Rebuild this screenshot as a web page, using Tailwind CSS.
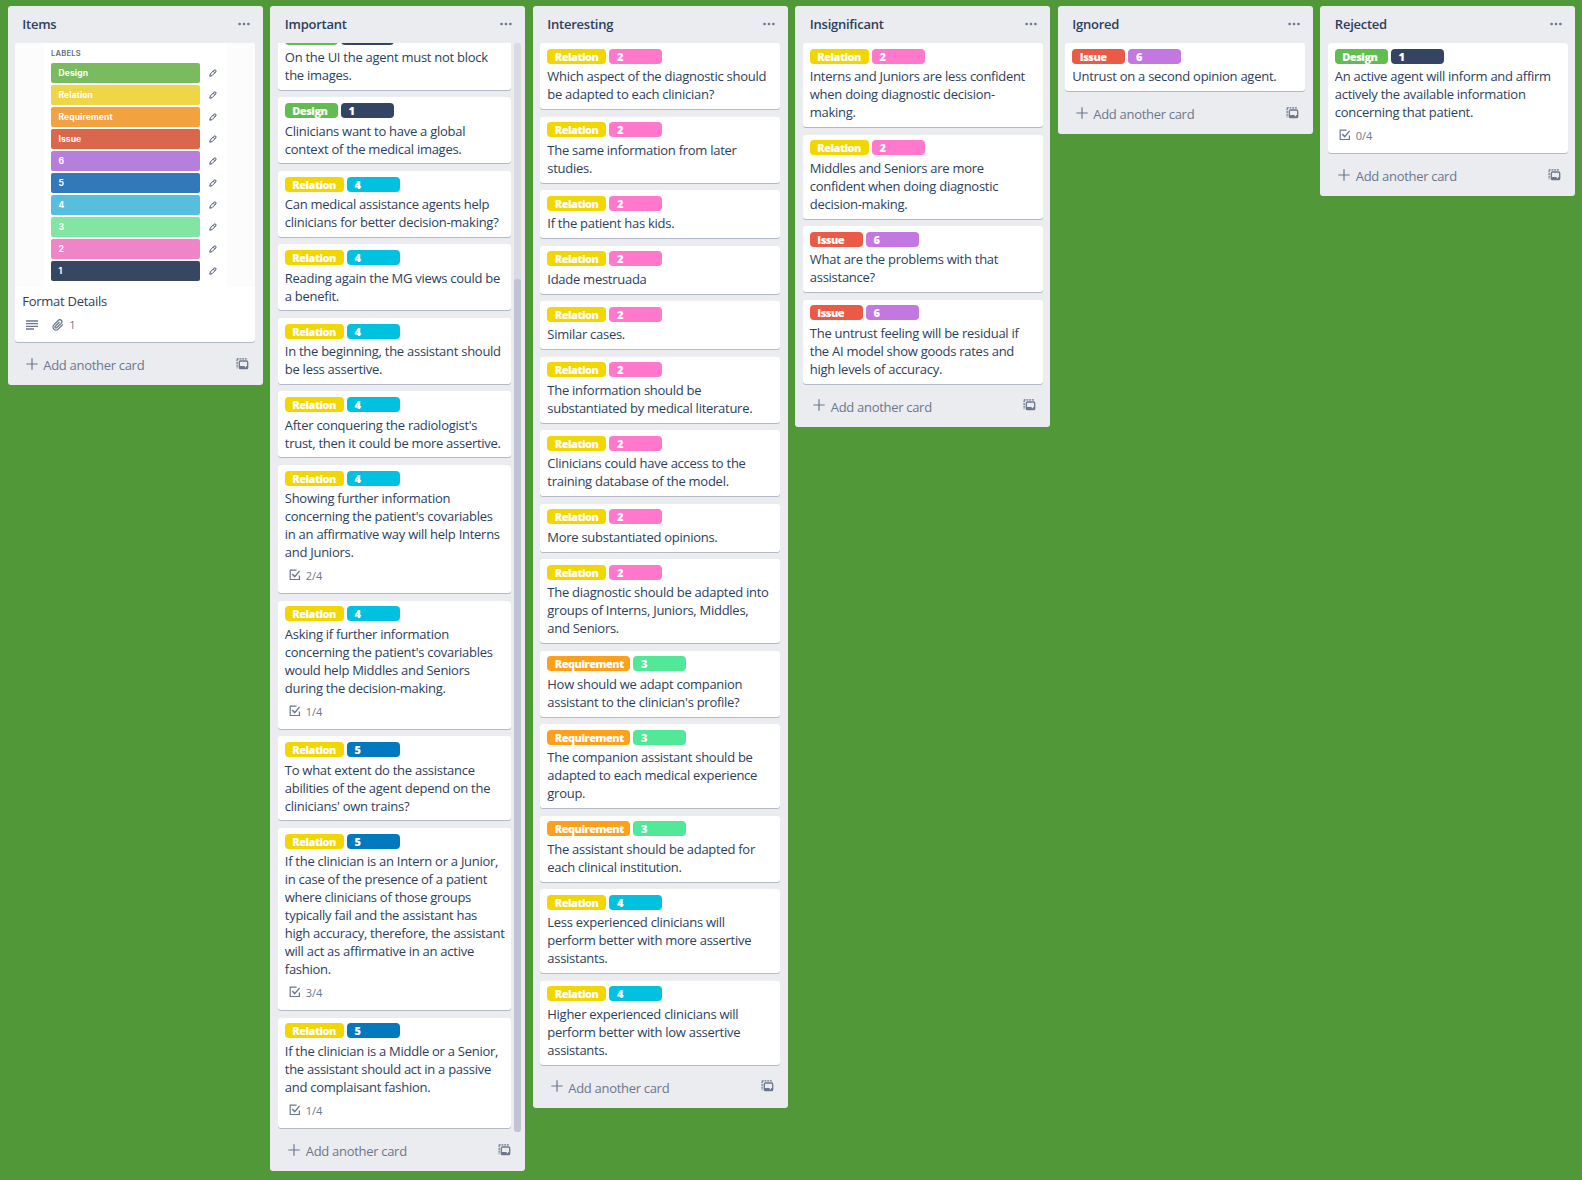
<!DOCTYPE html>
<html lang="en">
<head>
<meta charset="utf-8">
<title>Board</title>
<script src="https://cdn.jsdelivr.net/npm/@tailwindcss/browser@4"></script>
</head>
<body class="h-[1180px] overflow-hidden bg-[#519839] font-['Open_Sans','Noto_Sans',sans-serif] text-[#172b4d]">
<svg class="hidden">
  <symbol id="dots" viewBox="0 0 12 4"><circle cx="1.6" cy="2" r="1.35"/><circle cx="6" cy="2" r="1.35"/><circle cx="10.4" cy="2" r="1.35"/></symbol>
  <symbol id="plus" viewBox="0 0 12 12"><path d="M6 .3v11.4M.3 6h11.4" fill="none" stroke="currentColor" stroke-width="1.2"/></symbol>
  <symbol id="template" viewBox="0 0 13 12"><path d="M.8.8h10M1.1 1.4v8.8" fill="none" stroke="currentColor" stroke-width="1.2" stroke-dasharray="1.9 .8"/><rect x="3.3" y="3" width="8.4" height="7.6" rx="1.2" fill="none" stroke="currentColor" stroke-width="1.3"/><path d="M3.3 8.1h5.4v1.2h1.4V8.1h1.6v2.5H3.3z"/></symbol>
  <symbol id="check" viewBox="0 0 12 12"><path d="M7.6 1.2H1.2v9.3h9.2V6.6" fill="none" stroke="currentColor" stroke-width="1.2"/><path d="M3.2 5l2.5 2.6 4.9-5.7" fill="none" stroke="currentColor" stroke-width="1.4"/></symbol>
  <symbol id="lines" viewBox="0 0 12 10"><path d="M0 1h12M0 3.7h12M0 6.3h12M0 9h8" fill="none" stroke="currentColor" stroke-width="1.3"/></symbol>
  <symbol id="clip" viewBox="0 0 24 24"><path d="M21.4 11.05l-9.2 9.2a6 6 0 0 1-8.5-8.5l9.2-9.2a4 4 0 0 1 5.66 5.66l-9.2 9.2a2 2 0 0 1-2.83-2.83l8.5-8.48" fill="none" stroke="currentColor" stroke-width="2.5"/></symbol>
  <symbol id="pencil" viewBox="0 0 8 8"><path d="M.8 7.2l.5-2.2L4.9 1.3Q5.9.5 6.7 1.2T6.7 3L3 6.7z M4.3 2.2L5.8 3.7" fill="none" stroke="currentColor" stroke-width="1"/></symbol>
</svg>
<main id="board" class="flex items-start gap-[7.5px] pt-[6px] pl-[7.75px]"></main>
<script>
const tags = {
  Design: 'min-w-[53px] bg-[#61bd4f]', Relation: 'w-[59px] bg-[#f2d600]', Requirement: 'w-[83px] bg-[#ff9f1a]', Issue: 'min-w-[53px] bg-[#eb5a46]',
  6: 'w-[53px] bg-[#c377e0]', 5: 'w-[53px] bg-[#0079bf]', 4: 'w-[53px] bg-[#00c2e0]', 3: 'w-[53px] bg-[#51e898]', 2: 'w-[53px] bg-[#ff78cb]', 1: 'w-[53px] bg-[#344563]'
};
const tag = (t, bare) => `<span class="h-[15px] rounded-[4px] pl-[7.5px] text-[11px] leading-[16px] font-extrabold tracking-[-0.5px] text-white ${tags[t]}">${bare ? '' : t}</span>`;
const card = ([a, b, text, done, bare]) => `<article class="shrink-0 rounded-[3px] bg-white px-[7.3px] pt-[5.625px] pb-[5.625px] shadow-[0_1px_0_#b3b9c8]">
  <div class="mb-[3.75px] flex gap-[3.2px]">${tag(a, bare)}${tag(b, bare)}</div>
  <p class="text-[13px] leading-[18px] tracking-[-0.27px] whitespace-nowrap text-[#2c3e5d]">${text.split('|').join('<br>')}</p>
  ${done ? `<div class="flex h-[26.25px] items-start pt-[8px] pl-[4px] text-[11px] leading-[14px] text-[#6b778c]"><svg class="mr-[5px] size-[12px] fill-current"><use href="#check"/></svg>${done}</div>` : ''}
</article>`;
const swatches = [['Design','bg-[#7bbb5f]'],['Relation','bg-[#eed646]'],['Requirement','bg-[#f2a33f]'],['Issue','bg-[#da674c]'],['6','bg-[#b77fdc]'],['5','bg-[#3279b9]'],['4','bg-[#57bfdd]'],['3','bg-[#82e5a1]'],['2','bg-[#f084c8]'],['1','bg-[#384761]']];
const cover = `<article class="h-[299px] rounded-[3px] bg-white shadow-[0_1px_0_#b3b9c8]">
  <div class="flex h-[244px] justify-center rounded-t-[3px] bg-[#fcfcfc]">
    <div class="w-[183px] bg-white pt-[5px] pl-[7.5px]">
      <h3 class="h-[15px] font-['Inter'] text-[7.5px] leading-[11px] font-semibold tracking-[0.25px] text-[#5e6c84]">LABELS</h3>
      ${swatches.map(([n, c]) => `<div class="flex h-[22px] items-start"><span class="h-[20px] w-[149px] rounded-[2px] pl-[7.5px] font-['Inter'] text-[8.5px] leading-[20px] font-bold tracking-[0.1px] text-white ${c}">${n}</span><svg class="mt-[6px] ml-[9px] size-[8px] text-[#42526e]"><use href="#pencil"/></svg></div>`).join('')}
    </div>
  </div>
  <div class="px-[7.3px] pt-[5px]">
    <p class="text-[13px] leading-[18px] tracking-[-0.27px] text-[#2c3e5d]">Format Details</p>
    <div class="mt-[8px] flex items-center pl-[4px] text-[11px] leading-[14px] text-[#6b778c]"><svg class="h-[10px] w-[12px]"><use href="#lines"/></svg><svg class="ml-[14px] size-[12px]"><use href="#clip"/></svg><span class="ml-[5px]">1</span></div>
  </div>
</article>`;
const lists = [
  ['Items', null],
  ['Important', [
    ['Design','1','On the UI the agent must not block|the images.', '', true],
    ['Design','1','Clinicians want to have a global|context of the medical images.'],
    ['Relation','4','Can medical assistance agents help|clinicians for better decision-making?'],
    ['Relation','4','Reading again the MG views could be|a benefit.'],
    ['Relation','4','In the beginning, the assistant should|be less assertive.'],
    ['Relation','4',"After conquering the radiologist's|trust, then it could be more assertive."],
    ['Relation','4',"Showing further information|concerning the patient's covariables|in an affirmative way will help Interns|and Juniors.",'2/4'],
    ['Relation','4',"Asking if further information|concerning the patient's covariables|would help Middles and Seniors|during the decision-making.",'1/4'],
    ['Relation','5',"To what extent do the assistance|abilities of the agent depend on the|clinicians' own trains?"],
    ['Relation','5','If the clinician is an Intern or a Junior,|in case of the presence of a patient|where clinicians of those groups|typically fail and the assistant has|high accuracy, therefore, the assistant|will act as affirmative in an active|fashion.','3/4'],
    ['Relation','5','If the clinician is a Middle or a Senior,|the assistant should act in a passive|and complaisant fashion.','1/4']]],
  ['Interesting', [
    ['Relation','2','Which aspect of the diagnostic should|be adapted to each clinician?'],
    ['Relation','2','The same information from later|studies.'],
    ['Relation','2','If the patient has kids.'],
    ['Relation','2','Idade mestruada'],
    ['Relation','2','Similar cases.'],
    ['Relation','2','The information should be|substantiated by medical literature.'],
    ['Relation','2','Clinicians could have access to the|training database of the model.'],
    ['Relation','2','More substantiated opinions.'],
    ['Relation','2','The diagnostic should be adapted into|groups of Interns, Juniors, Middles,|and Seniors.'],
    ['Requirement','3',"How should we adapt companion|assistant to the clinician's profile?"],
    ['Requirement','3','The companion assistant should be|adapted to each medical experience|group.'],
    ['Requirement','3','The assistant should be adapted for|each clinical institution.'],
    ['Relation','4','Less experienced clinicians will|perform better with more assertive|assistants.'],
    ['Relation','4','Higher experienced clinicians will|perform better with low assertive|assistants.']]],
  ['Insignificant', [
    ['Relation','2','Interns and Juniors are less confident|when doing diagnostic decision-|making.'],
    ['Relation','2','Middles and Seniors are more|confident when doing diagnostic|decision-making.'],
    ['Issue','6','What are the problems with that|assistance?'],
    ['Issue','6','The untrust feeling will be residual if|the AI model show goods rates and|high levels of accuracy.']]],
  ['Ignored', [['Issue','6','Untrust on a second opinion agent.']]],
  ['Rejected', [['Design','1','An active agent will inform and affirm|actively the available information|concerning that patient.','0/4']]]
];
const body = (name, cards) => name === 'Important'
  ? `<div class="flex h-[1089px] gap-[3px] pr-[4px] pl-[7.25px]"><div class="flex flex-1 flex-col justify-end gap-[7.5px] overflow-hidden pb-[4.1px]">${cards.map(card).join('')}</div><div class="flex w-[7px] flex-col justify-end rounded-[3px] bg-[#dadbe2]"><div class="h-[853px] rounded-[3px] bg-[#c1c4d0]"></div></div></div>`
  : `<div class="flex flex-col gap-[7.5px] pr-[7.75px] pb-[4px] pl-[7.25px]">${cards ? cards.map(card).join('') : cover}</div>`;
document.getElementById('board').innerHTML = lists.map(([name, cards]) => `<section class="w-[255px] shrink-0 rounded-[3px] bg-[#ebecf0]">
  <header class="flex h-[37px] items-start justify-between pt-[9px] pr-[13px] pl-[14.6px]"><h2 class="text-[13px] leading-[18px] font-semibold tracking-[-0.25px] text-[#2c3e5d]">${name}</h2><svg class="mt-[6.5px] h-[4px] w-[12px] fill-[#6b778c]"><use href="#dots"/></svg></header>
  ${body(name, cards)}
  <footer class="flex h-[39px] items-start pt-[10px] pr-[14.2px] pl-[18px] text-[13px] text-[#6b778c]"><svg class="mt-[1.5px] size-[12px]"><use href="#plus"/></svg><span class="-mt-px ml-[5.5px] leading-[20px] tracking-[-0.3px]">Add another card</span><svg class="mt-[1.5px] ml-auto h-[12px] w-[13px] fill-current"><use href="#template"/></svg></footer>
</section>`).join('');
</script>
</body>
</html>
